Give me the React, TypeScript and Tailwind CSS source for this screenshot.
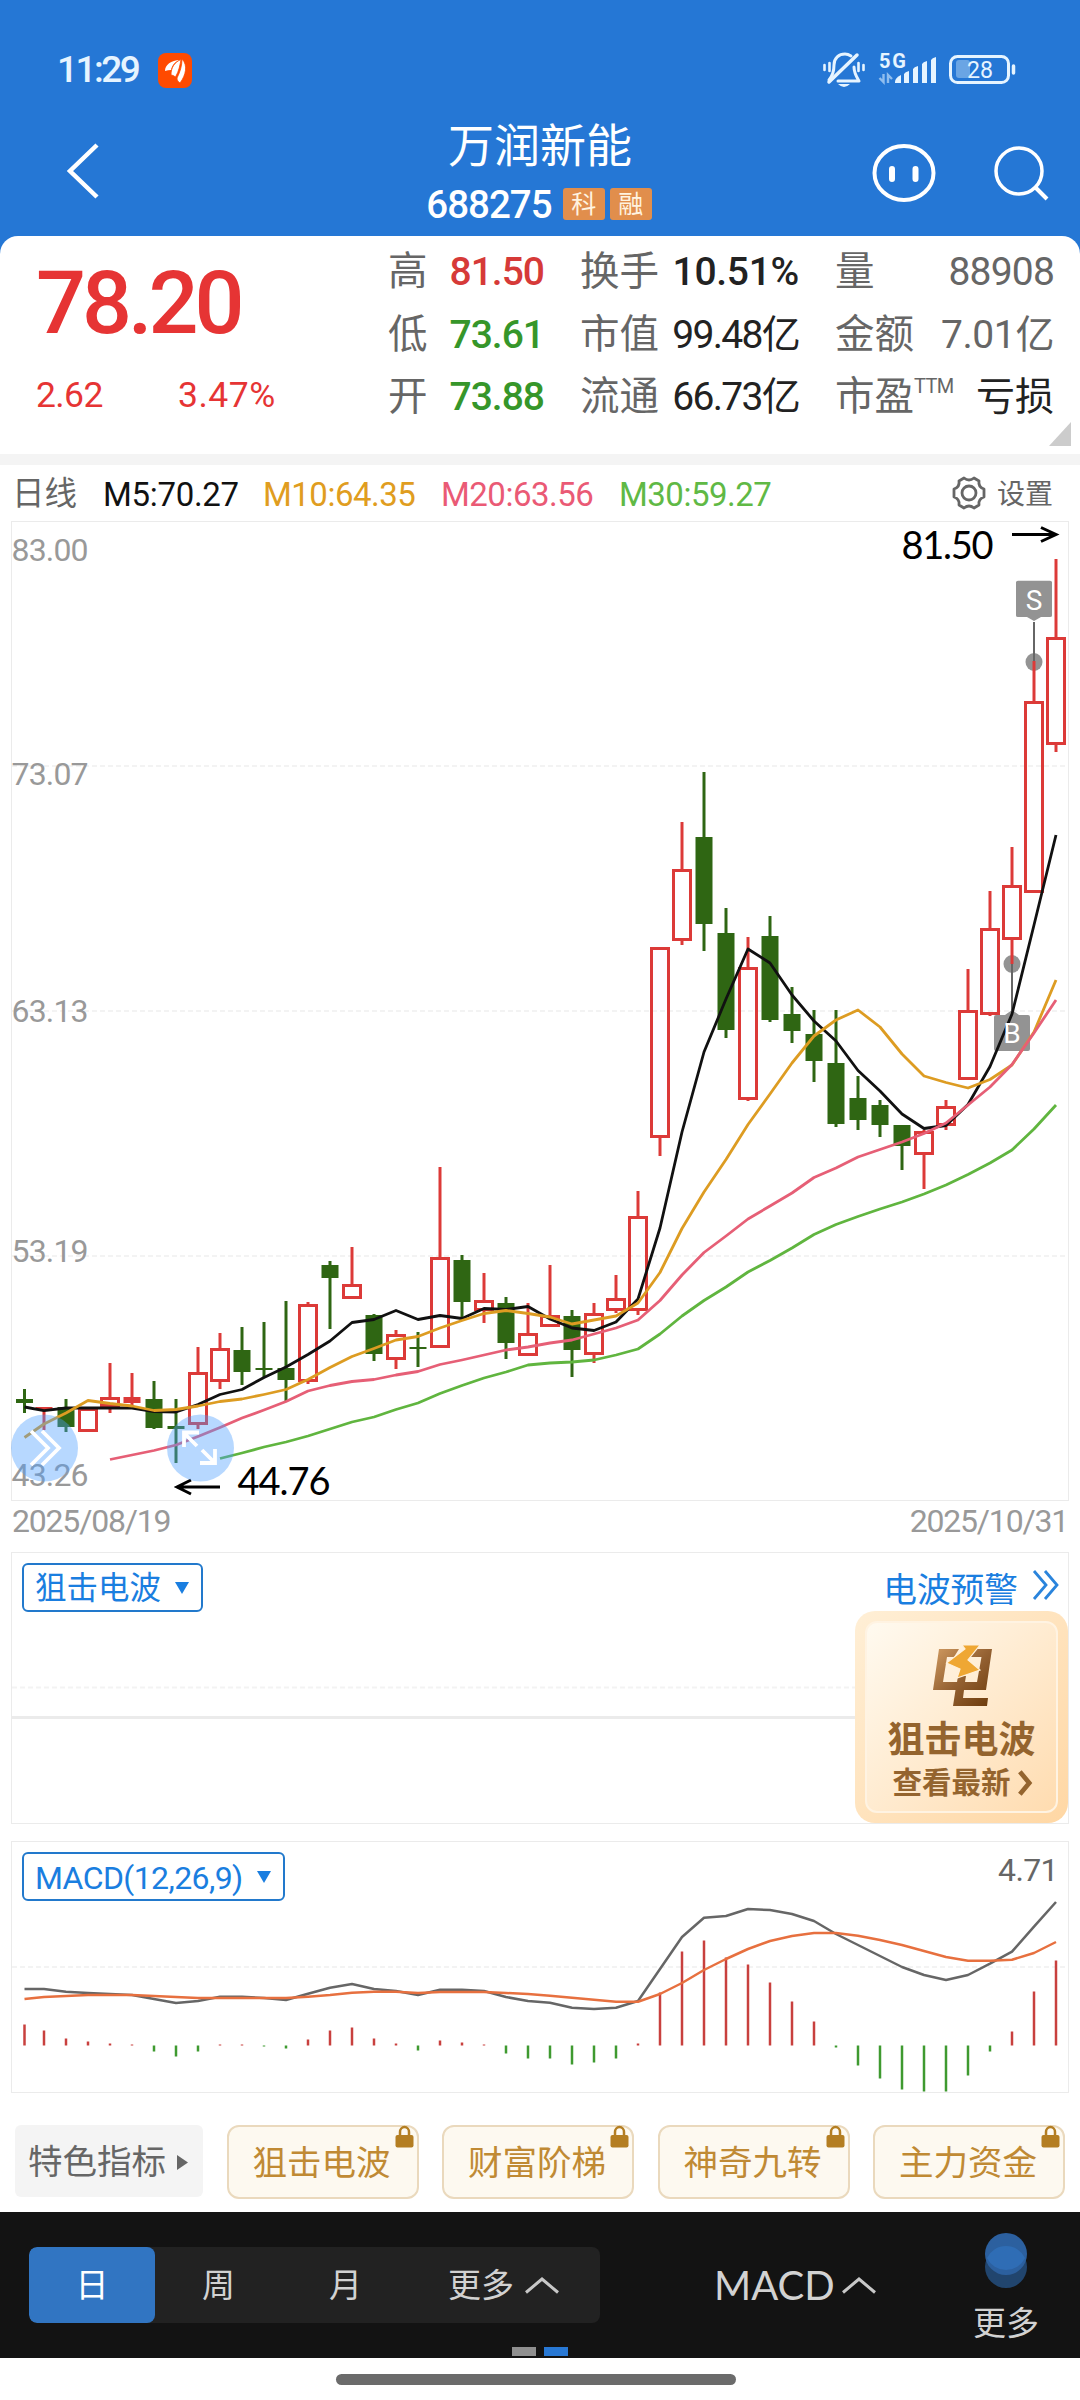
import type { ReactNode } from "react";

type Candle = [number, number, number, number, "r" | "g" | "f"];

// high, low, body top, body bottom, kind (r = hollow up, f = filled up, g = down)
const candles: Candle[] = [
  [1389, 1413, 1399, 1403, "g"],
  [1407, 1430, 1407, 1410, "f"],
  [1399, 1432, 1407, 1427, "g"],
  [1408, 1431, 1408, 1432, "r"],
  [1363, 1413, 1397, 1407, "r"],
  [1373, 1407, 1397, 1403, "f"],
  [1381, 1429, 1399, 1428, "g"],
  [1399, 1463, 1426, 1429, "g"],
  [1347, 1429, 1372, 1425, "r"],
  [1333, 1389, 1348, 1382, "r"],
  [1327, 1385, 1350, 1372, "g"],
  [1322, 1377, 1368, 1370, "g"],
  [1301, 1401, 1368, 1380, "g"],
  [1302, 1384, 1304, 1382, "r"],
  [1261, 1329, 1265, 1278, "g"],
  [1247, 1285, 1284, 1299, "r"],
  [1314, 1361, 1315, 1354, "g"],
  [1330, 1369, 1334, 1360, "r"],
  [1332, 1367, 1347, 1349, "g"],
  [1167, 1259, 1257, 1348, "r"],
  [1255, 1318, 1260, 1302, "g"],
  [1273, 1323, 1300, 1311, "r"],
  [1297, 1359, 1303, 1343, "g"],
  [1303, 1335, 1333, 1356, "r"],
  [1265, 1316, 1315, 1327, "r"],
  [1310, 1377, 1316, 1350, "g"],
  [1303, 1363, 1313, 1355, "r"],
  [1275, 1313, 1298, 1311, "r"],
  [1191, 1315, 1216, 1311, "r"],
  [948, 1156, 947, 1138, "r"],
  [822, 945, 869, 941, "r"],
  [772, 951, 837, 924, "g"],
  [908, 1038, 933, 1030, "g"],
  [937, 1101, 967, 1100, "r"],
  [916, 1022, 936, 1020, "g"],
  [987, 1043, 1014, 1031, "g"],
  [1010, 1082, 1034, 1061, "g"],
  [1010, 1127, 1063, 1124, "g"],
  [1076, 1130, 1098, 1120, "g"],
  [1100, 1137, 1105, 1125, "g"],
  [1125, 1170, 1125, 1146, "g"],
  [1130, 1189, 1131, 1155, "r"],
  [1100, 1130, 1106, 1126, "r"],
  [969, 1080, 1010, 1080, "r"],
  [891, 1016, 928, 1015, "r"],
  [847, 964, 885, 940, "r"],
  [661, 893, 701, 893, "r"],
  [559, 752, 637, 745, "r"],
];

const ma5 = [
  1407, 1410.7, 1408, 1408, 1408, 1408, 1411.5, 1412, 1404.5, 1394.5, 1389.5, 1377.5, 1367, 1354.5, 1341, 1322.5,
  1319.5, 1310.5, 1319.5, 1315.5, 1318.5, 1308.5, 1309.5, 1306.5, 1319, 1328, 1330.5, 1322, 1299, 1228, 1132, 1052,
  999, 949, 963, 995, 1021, 1041, 1070.5, 1091, 1114, 1128.5, 1125.5, 1104.5, 1066.5, 1014, 925, 835,
];
const ma10 = [
  1437.5, 1424, 1413, 1400.5, 1403.5, 1406, 1410.5, 1409.5, 1406, 1401.5, 1399, 1394.5, 1389.5, 1379.5, 1367.5, 1356.5,
  1348.5, 1340, 1336.5, 1328, 1320.5, 1313.5, 1310.5, 1313.5, 1317, 1324, 1320, 1316, 1303, 1272.5, 1228.5, 1192,
  1159.5, 1124.5, 1094, 1063, 1036, 1020, 1010, 1027, 1054, 1076, 1082.5, 1088, 1079.5, 1065, 1032, 980,
];
const ma20 = [
  1459.5, 1455, 1450.5, 1445, 1436.5, 1427.5, 1418, 1410, 1401.5, 1391, 1385.5, 1381.5, 1379.5, 1375, 1371.5, 1364.5,
  1360, 1355, 1350, 1347, 1343, 1340, 1334, 1328, 1320, 1300.5, 1275, 1252.5, 1236, 1219, 1206, 1193, 1177.5, 1168,
  1157, 1149.5, 1142, 1133.5, 1123, 1105, 1087, 1064.5, 1033, 1000,
];
const ma30 = [
  1458.5, 1453, 1447, 1442, 1436, 1429, 1422, 1417, 1409.5, 1403, 1393.5, 1385.5, 1378, 1372, 1365, 1363, 1362, 1360,
  1355, 1349, 1334, 1316, 1300.5, 1287, 1272, 1260.5, 1248, 1234.5, 1224.5, 1216.5, 1209, 1202, 1194, 1185, 1174.5,
  1163, 1150, 1129, 1105,
];

const dif = [
  1989, 1989, 1991.7, 1993, 1994, 1995, 1999, 2003, 2001, 1996.7, 1996.7, 1998, 2000, 1993.7, 1987.7, 1984, 1989, 1991,
  1995, 1989.7, 1989.7, 1991, 1997, 2001, 2002.7, 2007.7, 2009, 2007.7, 2001, 1969, 1937, 1917.7, 1916, 1909, 1910,
  1914, 1921, 1934, 1945, 1956, 1967, 1975, 1980, 1975, 1963.7, 1951.7, 1926.7, 1902,
];
const dea = [
  1999, 1997, 1996, 1995, 1995, 1995, 1996, 1997, 1998, 1998, 1998, 1998, 1998, 1996.7, 1995, 1992.7, 1991.7, 1991.7,
  1993, 1992, 1992, 1992, 1993, 1994, 1995.7, 1997.7, 1999.7, 2001.7, 2001.7, 1994, 1983, 1970, 1959, 1949, 1941, 1936,
  1933, 1933, 1935.7, 1940, 1945, 1951, 1957, 1960.7, 1960.7, 1959.7, 1953, 1942,
];
const hist = [
  21, 15, 7, 4, 2, 1, -6, -11, -6, 1, 1, -1, -3, 6, 15, 18, 7, 2, -5, 5, 3, 1, -8, -13, -13, -19, -17, -13, 2, 53, 94,
  105, 88, 81, 63, 44, 24, -2, -20, -33, -44, -46, -46, -30, -6, 14, 54, 85,
];

const xAt = (i: number) => (i === 0 ? 24.5 : 22 + i * 22);

const toPoints = (values: number[]) => {
  const offset = candles.length - values.length;
  return values.map((v, i) => `${xAt(i + offset)},${v}`).join(" ");
};

const RED = "#dc3a38";
const GREEN = "#2f6613";

function StatusBar() {
  return (
    <div className="flex h-[104px] items-end justify-between pr-[64px] pb-[16px] pl-[57px]">
      <div className="flex items-center gap-[19px]">
        <span className="w-[82px] text-[37px] leading-[36px] font-medium tracking-[-2.500px] text-[#e6f4ff]">11:29</span>
        <svg width="34" height="35" viewBox="0 0 34 35">
          <rect width="34" height="35" rx="8" fill="#ff4a00" />
          <path
            d="M7 18C7 12 13 7 22 7C16 9 14 13 13 17Q10 17 7 18Z"
            fill="#fff"
          />
          <path d="M13 22C13 14 17 9 23 6.500C22 12 21 18 17.500 24Q15 22 13 22Z" fill="#fff" stroke="#ff4a00" strokeWidth="0.8" />
          <path d="M24 6C30 12 28 22 22 30C20 29 19 27 19 25C22 19 24 13 24 6Z" fill="#fff" stroke="#ff4a00" strokeWidth="0.8" />
        </svg>
      </div>
      <svg width="194" height="38" viewBox="822 50 194 38" fill="none" stroke="#e6f4ff">
        <g strokeWidth="3" strokeLinecap="round" strokeLinejoin="round">
          <path d="M829 82L857 55" strokeWidth="3.5" />
          <path d="M829 80C834 74 834 69 834 65C834 58 839 54 845 54Q848 54 851 56" />
          <path d="M854 67C854 73 856 76 859 81H838" />
          <path d="M824.5 65v5M829.5 63v8M858.5 63v8M863.5 65v5" strokeWidth="2.6" />
        </g>
        <path d="M838 84H850Q844 90 838 84Z" fill="#e6f4ff" stroke="none" />
        <text x="879" y="68" textLength="27" fontSize="20" fontWeight="700" fill="#e6f4ff" stroke="none">
          5G
        </text>
        <g fill="#e6f4ff" stroke="none">
          <path d="M895 82q0-4 6-7v8h-6z" />
          <path d="M904 74q1-2 5-3v12h-5z" />
          <path d="M913 69q1-2 5-3v17h-5z" />
          <path d="M922 64q1-2 5-3v22h-5z" />
          <path d="M931 60q1-2 5-3v26h-5z" />
        </g>
        <path d="M883.500 74v8l-4-4M888 83v-8l4 4" stroke="#8fbdee" strokeWidth="2.4" />
        <rect x="950.500" y="56.500" width="58" height="26" rx="7" strokeWidth="3" />
        <rect x="956" y="60" width="14" height="18" rx="3" fill="#6aa5e4" stroke="none" />
        <path d="M1013.500 66v7" strokeWidth="3.500" strokeLinecap="round" />
        <text x="967" y="78" textLength="26" lengthAdjust="spacingAndGlyphs" fontSize="23" fill="#e6f4ff" stroke="none">
          28
        </text>
      </svg>
    </div>
  );
}

function Header() {
  return (
    <div className="flex h-[132px] justify-between pr-[31px] pl-[66px]">
      <svg className="mt-[38px]" width="34" height="58" viewBox="0 0 34 58" fill="none" stroke="#fff" strokeWidth="4.500">
        <path d="M31 3L4 29L31 55" />
      </svg>
      <div className="ml-[111px] flex flex-col items-center">
        <h1 className="mt-[17px] mr-[3px] text-[46px] leading-[50px] text-white">万润新能</h1>
        <div className="mt-[13px] flex items-center">
          <span className="mr-[11px] pt-[2px] text-[38.500px] leading-[38px] font-medium tracking-[-1px] text-white">
            688275
          </span>
          {["科", "融"].map((tag) => (
            <span
              key={tag}
              className="mr-[5px] flex h-[32px] w-[42px] items-center justify-center rounded-[3px] bg-[#e18e4c] text-[25px] leading-none text-[#fff3e0]"
            >
              {tag}
            </span>
          ))}
        </div>
      </div>
      <div className="mt-[39px] flex items-start gap-[57px]">
        <svg width="64" height="60" viewBox="0 0 64 60" fill="none" stroke="#fff">
          <ellipse cx="32" cy="30" rx="29.500" ry="27" strokeWidth="4" />
          <path d="M20 26v10M43.500 26v10" strokeWidth="6" strokeLinecap="round" />
        </svg>
        <svg className="mt-[2px]" width="56" height="56" viewBox="0 0 56 56" fill="none" stroke="#fff" strokeWidth="3.500">
          <circle cx="26" cy="26" r="23" />
          <path d="M42 42L54 54" strokeWidth="4" />
        </svg>
      </div>
    </div>
  );
}

function Stat({ label, sup, value, color }: { label: string; sup?: string; value: string; color: string }) {
  return (
    <div className="flex h-[62.500px] items-center justify-between whitespace-nowrap">
      <span className="flex text-[39.500px] leading-[62px] text-[#666]">
        {label}
        {sup && <sup className="top-0 mt-[10px] text-[20px] leading-[20px] tracking-[-0.6px]">{sup}</sup>}
      </span>
      <span className={`text-[39px] leading-[62px] ${color}`}>{value}</span>
    </div>
  );
}

function Quote() {
  return (
    <section className="relative flex h-[218px] rounded-t-[18px] bg-white pt-[5px]">
      <div className="w-[388px] pl-[36px] font-medium text-[#e63434]">
        <div className="mt-[12px] text-[88px] leading-[100px] tracking-[-4px]">78.20</div>
        <div className="mt-[22px] flex text-[35.500px] leading-[40px] font-normal tracking-[-0.6px]">
          <span className="w-[142px]">2.62</span>
          <span className="tracking-[0.5px]">3.47%</span>
        </div>
      </div>
      <div className="w-[156px]">
        <Stat label="高" value="81.50" color="text-[#d63a38] font-medium tracking-[-1px]" />
        <Stat label="低" value="73.61" color="text-[#36962a] font-medium tracking-[-1px]" />
        <Stat label="开" value="73.88" color="text-[#36962a] font-medium tracking-[-1px]" />
      </div>
      <div className="ml-[36px] w-[219px]">
        <Stat label="换手" value="10.51%" color="text-[#222] font-medium tracking-[-0.3px]" />
        <Stat label="市值" value="99.48亿" color="text-[#222] tracking-[-1.7px]" />
        <Stat label="流通" value="66.73亿" color="text-[#222] tracking-[-1.7px]" />
      </div>
      <div className="ml-[36px] w-[219px]">
        <Stat label="量" value="88908" color="text-[#666] tracking-[-0.8px]" />
        <Stat label="金额" value="7.01亿" color="text-[#666] tracking-[-0.4px]" />
        <Stat label="市盈" sup="TTM" value="亏损" color="text-[#222]" />
      </div>
      <svg className="absolute right-[9px] bottom-[8px]" width="22" height="24">
        <path d="M22 0V24H0Z" fill="#ccc" />
      </svg>
    </section>
  );
}

function Legend() {
  return (
    <div className="flex h-[56px] items-center pt-[3px] pr-[27px] pl-[12px] text-[33px] tracking-[-0.5px] whitespace-nowrap">
      <span className="w-[91px] text-[32.500px] tracking-normal text-[#666]">日线</span>
      <span className="w-[160px] tracking-[-0.3px] text-[#111]">M5:70.27</span>
      <span className="w-[178px] text-[#e09d20]">M10:64.35</span>
      <span className="w-[178px] text-[#ea5a75]">M20:63.56</span>
      <span className="text-[#60b945]">M30:59.27</span>
      <div className="ml-auto flex items-center gap-[10px] text-[28px] tracking-normal text-[#666]">
        <svg className="mb-[3px]" width="36" height="36" viewBox="0 0 36 36" fill="none" stroke="#666" strokeWidth="2.800">
          <circle cx="18" cy="18" r="7" />
          <path
            d="M13 3Q18 7 23 3L28 6Q27 12 33 14V22Q27 24 28 30L23 33Q18 29 13 33L8 30Q9 24 3 22V14Q9 12 8 6Z"
            strokeLinejoin="round"
          />
        </svg>
        设置
      </div>
    </div>
  );
}

function CandleShape({ candle, x }: { candle: Candle; x: number }) {
  const [high, low, top, bottom, kind] = candle;
  if (kind === "r") {
    return (
      <g stroke={RED} strokeWidth="3" fill="none">
        {high < top && <path d={`M${x} ${high}V${top + 1}`} />}
        {low > bottom && <path d={`M${x} ${bottom - 1}V${low}`} />}
        <rect x={x - 8.5} y={top + 1.5} width="17" height={bottom - top - 3} />
      </g>
    );
  }
  const color = kind === "g" ? GREEN : RED;
  return (
    <g>
      <path d={`M${x} ${high}V${low}`} stroke={color} strokeWidth="3" />
      <rect x={x - 8.5} y={top} width="17" height={bottom - top} fill={color} />
    </g>
  );
}

function PriceChart() {
  const labels: [string, number][] = [
    ["83.00", 561],
    ["73.07", 785],
    ["63.13", 1022],
    ["53.19", 1262],
    ["43.26", 1486],
  ];
  return (
    <svg className="block" width="1080" height="981" viewBox="0 521 1080 981" fill="none">
      <rect x="11.500" y="521.500" width="1057" height="979" stroke="#ebebeb" />
      {[766, 1011, 1256].map((y) => (
        <path key={y} d={`M12 ${y}H1068`} stroke="#f3f3f3" strokeWidth="2" strokeDasharray="5 3" />
      ))}
      {labels.map(([text, y]) => (
        <text key={text} x="11.500" y={y} textLength="77" fontSize="32" fill="#999">
          {text}
        </text>
      ))}
      <g fill="#939393">
        <ellipse cx="1034" cy="662" rx="8.500" ry="9" />
        <ellipse cx="1012" cy="964" rx="8.500" ry="9" />
      </g>
      <path d="M1034 622V661M1012 964V1011" stroke="#666" strokeWidth="2" />
      {candles.map((c, i) => (
        <CandleShape key={i} candle={c} x={xAt(i)} />
      ))}
      <g fill="#939393">
        <path d="M1018 571H1050Q1052 571 1052 573V615Q1052 617 1050 617H1041L1034 622L1027 617H1018Q1016 617 1016 615V573Q1016 571 1018 571Z" transform="translate(0 129.600) scale(1 0.79)" />
        <path d="M996 1015H1005L1012 1010L1019 1015H1028Q1030 1015 1030 1017V1049Q1030 1051 1028 1051H996Q994 1051 994 1049V1017Q994 1015 996 1015Z" />
      </g>
      <g strokeWidth="2.800" strokeLinejoin="round">
        <polyline points={toPoints(ma5)} stroke="#111" />
        <polyline points={toPoints(ma10)} stroke="#dd9c22" />
        <polyline points={toPoints(ma20)} stroke="#e65f76" />
        <polyline points={toPoints(ma30)} stroke="#60b53f" />
      </g>
      <g fill="#fff" fontSize="28" textAnchor="middle">
        <text x="1034" y="610">
          S
        </text>
        <text x="1012" y="1043">
          B
        </text>
      </g>
      <g className="font-['Lato']" fill="#000" fontSize="38">
        <text x="901.500" y="559" textLength="92">
          81.50
        </text>
        <text x="237.500" y="1495" textLength="93">
          44.76
        </text>
      </g>
      <g stroke="#000" strokeWidth="3">
        <path d="M1012 534.500H1056M1041 527.500L1056 534.500L1041 541.500" />
        <path d="M220 1487H177M191 1480L177 1487L191 1494" />
      </g>
      <g fill="#4a9dff" fillOpacity="0.4">
        <circle cx="44.500" cy="1448" r="33.500" />
        <circle cx="200.500" cy="1448" r="33.500" />
      </g>
      <g stroke="#fff" strokeWidth="3.800">
        <path d="M31 1431L48 1448L31 1465M42 1431L59 1448L42 1465" />
        <path d="M197 1446L184 1433M184 1447V1432.500H199M202 1450L215 1463M215 1449V1463H200" />
      </g>
    </svg>
  );
}

function IndicatorButton({ width, children }: { width: string; children: ReactNode }) {
  return (
    <button
      className={`flex h-[49px] items-center justify-between rounded-[6px] border-[2.500px] border-[#2279cc] bg-white pt-[2px] pr-[12px] pl-[11px] leading-none whitespace-nowrap text-[#1a7ee0] ${width}`}
    >
      {children}
      <svg className="mb-[2px]" width="14" height="12">
        <path d="M0 0H14L7 12Z" fill="#1a7ee0" />
      </svg>
    </button>
  );
}

function PromoCard() {
  return (
    <div className="absolute top-[58px] right-0 h-[212px] w-[213px] rounded-[20px] bg-linear-to-br from-[#ffefd6] to-[#ffd7a4] p-[10px]">
      <div className="flex h-full flex-col items-center rounded-[12px] border-2 border-[#fff3e2] bg-linear-to-br from-[#fffaf0] to-[#ffdcb0] pt-[21px] text-[#94642e]">
        <svg width="60" height="62" viewBox="931 1643 60 62">
          <defs>
            <linearGradient id="bronze" x1="0" y1="0" x2="1" y2="1">
              <stop offset="0" stopColor="#d09a60" />
              <stop offset="0.500" stopColor="#946132" />
              <stop offset="1" stopColor="#6b3a0b" />
            </linearGradient>
          </defs>
          <path
            fill="url(#bronze)"
            d="M938 1648H958L953 1656H946L942 1681H956L957 1675H965L964 1681H976L980.500 1656H968L974 1648H991L985 1689H963L962 1697H987L986 1705H952L954.500 1689H932Z"
          />
          <path
            fill="#efa733"
            stroke="#fff0da"
            strokeWidth="1.200"
            d="M961 1644H979L967 1659L979 1669L956 1677L959 1668L945.500 1662L964 1648Z"
          />
        </svg>
        <div className="mt-[15px] text-[37px] leading-[40px] font-bold">狙击电波</div>
        <div className="mt-[5px] flex items-center gap-[7px] pl-[2px] text-[29.500px] leading-[34px] font-bold whitespace-nowrap">
          查看最新
          <svg width="15" height="26" viewBox="0 0 16 26" fill="none" stroke="#94642e" strokeWidth="5">
            <path d="M2 1L12 13L2 25" />
          </svg>
        </div>
      </div>
    </div>
  );
}

function WavePanel() {
  return (
    <section className="relative mx-[11px] flex h-[272px] items-start justify-between border border-[#ebebeb] pt-[10px] pr-[9px] pl-[10px]">
      <svg className="absolute top-0 left-0" width="1056" height="270" fill="none">
        <path d="M0 134.500H1056" stroke="#f3f3f3" strokeWidth="2" strokeDasharray="5 3" />
        <path d="M0 164.500H1056" stroke="#ebebeb" strokeWidth="3" />
      </svg>
      <div className="relative text-[31.500px]">
        <IndicatorButton width="w-[181px]">狙击电波</IndicatorButton>
      </div>
      <div className="relative mt-[3px] flex items-center gap-[14px] text-[33.700px] leading-[50px] text-[#1a7ee0]">
        电波预警
        <svg className="mb-[12px]" width="27" height="30" viewBox="0 0 27 30" fill="none" stroke="#2a84dc" strokeWidth="2.800">
          <path d="M2 1L14 15L2 29M13 1L25 15L13 29" />
        </svg>
      </div>
      <PromoCard />
    </section>
  );
}

function MacdPanel() {
  return (
    <section className="relative mx-[11px] mt-[17px] flex h-[252px] items-start justify-between border border-[#ebebeb] pt-[10px] pr-[10px] pl-[10px]">
      <svg className="absolute -top-px -left-px" width="1058" height="252" viewBox="11 1841 1058 252" fill="none">
        <path d="M12 1967H1068" stroke="#f3f3f3" strokeWidth="2" strokeDasharray="5 3" />
        {hist.map((h, i) => (
          <path key={i} d={`M${xAt(i)} 2045.500v${-h}`} stroke={h > 0 ? "#c8403e" : "#3f9a30"} strokeWidth="2.500" />
        ))}
        <g strokeWidth="2.500" strokeLinejoin="round">
          <polyline points={toPoints(dif)} stroke="#666" />
          <polyline points={toPoints(dea)} stroke="#e7703f" />
        </g>
      </svg>
      <div className="relative text-[32px] tracking-[-0.6px]">
        <IndicatorButton width="w-[263px]">MACD(12,26,9)</IndicatorButton>
      </div>
      <span className="relative text-[32px] leading-[36px] tracking-[-0.6px] text-[#666]">4.71</span>
    </section>
  );
}

function Tags() {
  return (
    <div className="flex h-[119px] items-start justify-between pt-[32px] pr-[15px] pl-[15px] text-[34.500px] leading-none">
      <div className="flex h-[72px] w-[188px] items-center gap-[11px] rounded-[6px] bg-[#f4f4f4] pt-[2px] pl-[13px] text-[#666]">
        特色指标
        <svg width="11" height="15">
          <path d="M0 0L11 7.500L0 15Z" fill="#666" />
        </svg>
      </div>
      {["狙击电波", "财富阶梯", "神奇九转", "主力资金"].map((name) => (
        <div
          key={name}
          className="relative flex h-[74px] w-[192px] items-center justify-center rounded-[12px] border-2 border-[#ead9bd] bg-[#fdf9f0] pt-[2px] pr-[2px] text-[#c08a34]"
        >
          {name}
          <svg className="absolute -top-[2px] right-[3px]" width="19" height="23" viewBox="0 0 19 23">
            <path d="M5 11V7a4.500 5 0 0 1 9 0V11" fill="none" stroke="#b47e22" strokeWidth="2.500" />
            <rect x="0.500" y="10" width="18" height="12.500" rx="2" fill="#b47e22" />
          </svg>
        </div>
      ))}
    </div>
  );
}

function Caret() {
  return (
    <svg width="34" height="17" viewBox="0 0 34 17" fill="none" stroke="#c8c8c8" strokeWidth="3">
      <path d="M1 15.500L17 2L33 15.500" />
    </svg>
  );
}

function BottomBar() {
  return (
    <nav className="relative flex h-[146px] bg-[#131313] text-[33px] leading-none text-[#d2d2d2]">
      <div className="mt-[35px] ml-[29px] flex h-[76px] w-[571px] overflow-hidden rounded-[8px] bg-[#222]">
        <span className="flex w-[126px] items-center justify-center rounded-[8px] bg-[#3175c2] text-white">日</span>
        <span className="flex w-[127px] items-center justify-center">周</span>
        <span className="flex w-[127px] items-center justify-center">月</span>
        <span className="flex flex-1 items-center justify-center gap-[11px] pr-[2px]">
          更多
          <Caret />
        </span>
      </div>
      <div className="mt-[35px] ml-[114px] flex h-[76px] items-center gap-[9px]">
        <span className="w-[119px] font-['Lato'] text-[40px]">MACD</span>
        <Caret />
      </div>
      <div className="mt-[20px] mr-[40px] ml-auto flex w-[68px] flex-col items-center">
        <svg width="44" height="57" viewBox="0 0 44 57">
          <circle cx="22" cy="35" r="21" fill="#21456e" />
          <circle cx="22" cy="22" r="21" fill="#2c609f" />
          <path d="M3 26A21 21 0 0 1 41 26A21 21 0 0 1 3 26Z" fill="#2f6db5" />
        </svg>
        <span className="mt-[18px]">更多</span>
      </div>
      <div className="absolute bottom-[2px] left-[512px] flex gap-[8px]">
        <i className="h-[9px] w-[24px] bg-[#8f8f8f]" />
        <i className="h-[9px] w-[24px] bg-[#2878d4]" />
      </div>
    </nav>
  );
}

export default function App() {
  return (
    <div className="h-[2400px] w-[1080px] overflow-hidden bg-white font-['Roboto','Noto_Sans_CJK_SC',sans-serif]">
      <div className="bg-[#2577d5]">
        <StatusBar />
        <Header />
        <Quote />
      </div>
      <div className="h-[11px] bg-[#f4f4f4]" />
      <Legend />
      <PriceChart />
      <div className="flex h-[50px] justify-between px-[12px] pt-px text-[32px] leading-[36px] tracking-[-1.2px] text-[#999]">
        <span>2025/08/19</span>
        <span>2025/10/31</span>
      </div>
      <WavePanel />
      <MacdPanel />
      <Tags />
      <BottomBar />
      <div className="flex h-[42px] justify-center pt-[16px] pr-[9px]">
        <div className="h-[11px] w-[400px] rounded-full bg-[#6b6b6b]" />
      </div>
    </div>
  );
}
